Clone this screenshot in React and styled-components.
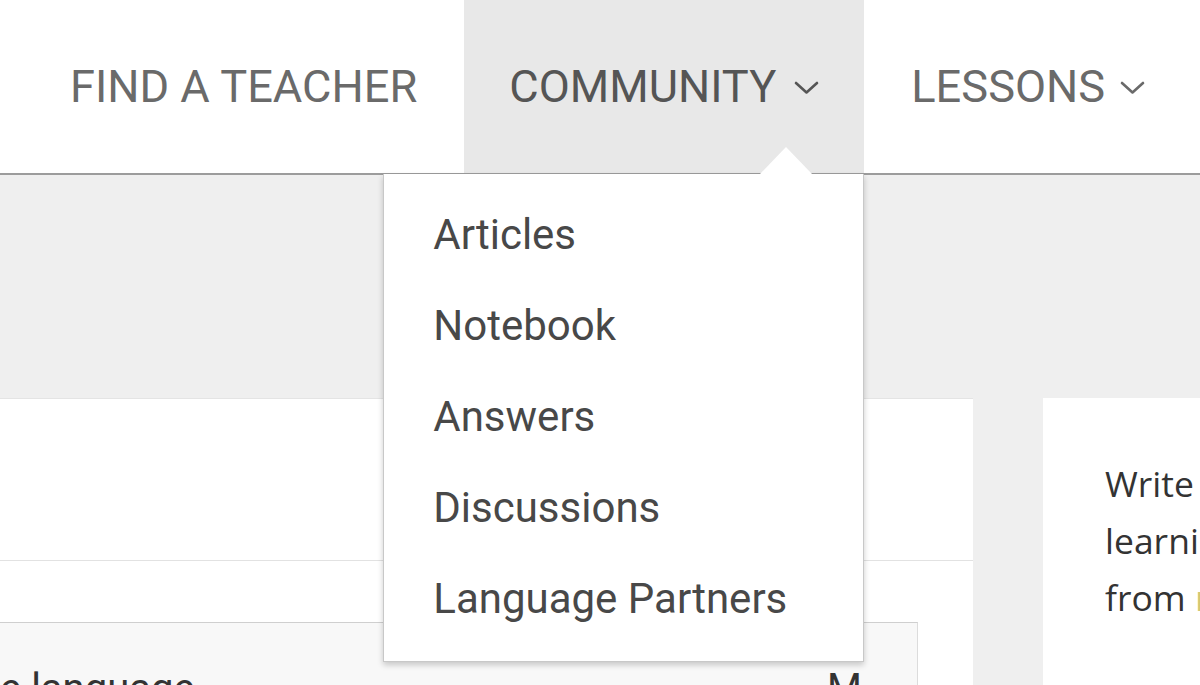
import React from 'react';
import styled, { createGlobalStyle } from 'styled-components';

const GlobalStyle = createGlobalStyle`
  html, body {
    margin: 0;
    padding: 0;
    background: #efefef;
    overflow: hidden;
  }
  body {
    font-family: Roboto, "Liberation Sans", sans-serif;
  }
`

const Page = styled.div`
  width: 1200px;
  height: 685px;
  overflow: hidden;
  position: relative;
`

const Header = styled.header`
  height: 173px;
  background: #fff;
  border-bottom: 2px solid #9c9c9c;
  display: flex;
  align-items: stretch;
  padding-left: 25px;
  position: relative;
  z-index: 2;
`

const NavItem = styled.div`
  position: relative;
  display: flex;
  align-items: center;
  gap: ${p => p.tight ? '15px' : '18px'};
  padding: 0 45px;
  font-size: 45.2px;
  color: ${p => p.active ? '#555' : '#6a6a6a'};
  background: ${p => p.active ? '#e8e8e8' : 'transparent'};
  white-space: nowrap;
  margin-left: ${p => p.first ? '0' : '2px'};
`

const Chevron = styled.svg`
  width: 25px;
  height: 14px;
  margin-top: 2px;
`

const Dropdown = styled.div`
  position: absolute;
  top: calc(100% + 1px);
  right: 0;
  width: 479px;
  background: #fff;
  border: 1px solid #c8c8c8;
  border-top: none;
  box-shadow: 0 3px 6px rgba(0, 0, 0, 0.2);
  padding: 15px 0 17px;
  z-index: 5;
`

const Caret = styled.div`
  position: absolute;
  top: -27px;
  left: 376px;
  width: 0;
  height: 0;
  border-left: 26px solid transparent;
  border-right: 26px solid transparent;
  border-bottom: 27px solid #fff;
`

const MenuItem = styled.div`
  height: 91px;
  line-height: 91px;
  padding-left: 49px;
  font-size: 42px;
  color: #484848;
`

const Content = styled.div`
  display: grid;
  grid-template-columns: 973px 400px;
  column-gap: 70px;
  padding-top: 223px;
`

const LeftCard = styled.div`
  background: #fff;
  border-top: 1px solid #e4e4e4;
  height: 300px;
  display: flex;
  flex-direction: column;
`

const CardTop = styled.div`
  flex-shrink: 0;
  height: 161px;
  border-bottom: 1px solid #e2e2e2;
`

const CardGap = styled.div`
  flex-shrink: 0;
  height: 61px;
`

const LangBox = styled.div`
  flex-shrink: 0;
  width: 918px;
  height: 100px;
  background: #f8f8f8;
  border-top: 1px solid #cfcfcf;
  border-right: 1px solid #dcdcdc;
  display: flex;
  justify-content: space-between;
  padding: 42px 55px 0 0;
  box-sizing: border-box;
  font-size: 40px;
  line-height: 48px;
  color: #333;
`

const RightCard = styled.div`
  background: #fff;
  height: 300px;
  padding: 57px 0 0 62px;
  font-family: "Open Sans", "Liberation Sans", sans-serif;
  font-size: 35.5px;
  line-height: 57px;
  color: #333;
  white-space: nowrap;
`

const Highlight = styled.span`
  color: #d3c872;
`

const navChevron = (
  <Chevron viewBox="0 0 25 14" fill="none">
    <path d="M2 2 L12.5 11.5 L23 2" stroke="currentColor" strokeWidth="2.6" strokeLinecap="round" strokeLinejoin="round" />
  </Chevron>
)

const menu = ['Articles', 'Notebook', 'Answers', 'Discussions', 'Language Partners'];

export default function App() {
  return (
    <Page>
      <GlobalStyle />
      <Header>
        <NavItem first>FIND A TEACHER</NavItem>
        <NavItem active>
          COMMUNITY
          {navChevron}
          <Dropdown>
            <Caret />
            {menu.map((item, i) => (
              <MenuItem key={i}>{item}</MenuItem>
            ))}
          </Dropdown>
        </NavItem>
        <NavItem tight>
          LESSONS
          {navChevron}
        </NavItem>
      </Header>
      <Content>
        <LeftCard>
          <CardTop />
          <CardGap />
          <LangBox>
            <span>e language</span>
            <span>M</span>
          </LangBox>
        </LeftCard>
        <RightCard>
          Write about anything you are<br />
          learning and get corrections<br />
          from <Highlight>native speakers</Highlight>
        </RightCard>
      </Content>
    </Page>
  );
}
